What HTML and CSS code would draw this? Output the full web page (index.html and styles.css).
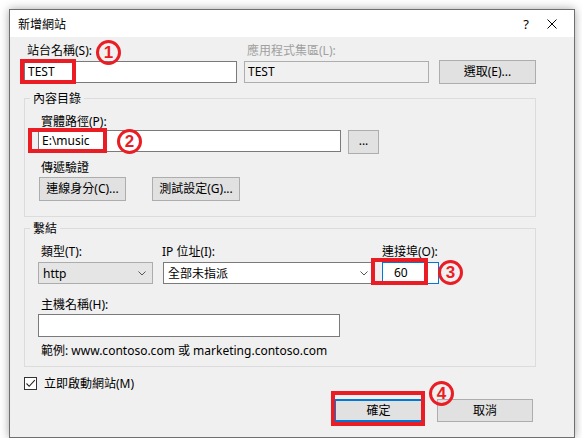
FILE: index.html
```html
<!DOCTYPE html>
<html lang="zh-Hant">
<head>
<meta charset="utf-8">
<title>新增網站</title>
<link rel="stylesheet" href="styles.css">
</head>
<body>
<div class="dialog">
  <div class="titlebar">
    <span class="title">新增網站</span>
    <span class="help">?</span>
    <svg class="close" width="10" height="10" viewBox="0 0 10 10"><path d="M0.5 0.5 L9.5 9.5 M9.5 0.5 L0.5 9.5" stroke="#000" stroke-width="1" fill="none"/></svg>
  </div>
  <div class="body">
    <div class="row1">
      <div class="lbl lbl-name">站台名稱(S):</div>
      <div class="lbl lbl-pool disabled">應用程式集區(L):</div>
      <div class="spacer"></div>
      <div class="input in-name">TEST</div>
      <div class="input in-pool">TEST</div>
      <div class="btn btn-select">選取(E)...</div>
    </div>

    <fieldset class="group g-content">
      <legend>內容目錄</legend>
      <div class="lbl">實體路徑(P):</div>
      <div class="path-row">
        <div class="input in-path">E:\music</div>
        <div class="btn btn-browse">...</div>
      </div>
      <div class="lbl lbl-auth">傳遞驗證</div>
      <div class="auth-row">
        <div class="btn btn-connect">連線身分(C)...</div>
        <div class="btn btn-test">測試設定(G)...</div>
      </div>
    </fieldset>

    <fieldset class="group g-binding">
      <legend>繫結</legend>
      <div class="bind-grid">
        <div class="lbl lbl-type">類型(T):</div>
        <div class="lbl lbl-ip">IP 位址(I):</div>
        <div class="lbl lbl-port">連接埠(O):</div>
        <div class="select sel-type"><span>http</span><svg width="8" height="5" viewBox="0 0 8 5"><path d="M0.5 0.5 L4 4 L7.5 0.5" stroke="#555" fill="none"/></svg></div>
        <div class="select sel-ip"><span>全部未指派</span><svg width="8" height="5" viewBox="0 0 8 5"><path d="M0.5 0.5 L4 4 L7.5 0.5" stroke="#555" fill="none"/></svg></div>
        <div class="input in-port">60</div>
      </div>
      <div class="lbl lbl-host">主機名稱(H):</div>
      <div class="input in-host"></div>
      <div class="lbl lbl-example">範例: www.contoso.com 或 marketing.contoso.com</div>
    </fieldset>

    <div class="check-row">
      <span class="checkbox"><svg width="11" height="11" viewBox="0 0 11 11"><path d="M1.5 5.5 L4.2 8.3 L9.8 2.2" stroke="#222" stroke-width="1.1" fill="none"/></svg></span>
      <span class="check-label">立即啟動網站(M)</span>
    </div>

    <div class="footer">
      <div class="btn btn-ok">確定</div>
      <div class="btn btn-cancel">取消</div>
    </div>
  </div>

  <div class="mark box1"></div>
  <div class="mark box2"></div>
  <div class="mark box3"></div>
  <div class="mark box4"></div>
  <div class="num num1">1</div>
  <div class="num num2">2</div>
  <div class="num num3">3</div>
  <div class="num num4">4</div>
</div>
</body>
</html>
```

FILE: styles.css
```css
* { box-sizing: border-box; }
html, body { margin: 0; padding: 0; background: #ffffff; }
body {
  font-family: "Segoe UI", "Noto Sans", "Noto Sans CJK TC", sans-serif;
  font-size: 12px;
  color: #000;
}
.dialog {
  position: relative;
  margin: 9px 0 0 9px;
  width: 566px;
  height: 429px;
  border: 1px solid #6f6f6f;
  background: #f0f0f0;
  box-shadow: 0 0 9px rgba(0,0,0,0.35);
  display: flex;
  flex-direction: column;
}
.titlebar {
  height: 27px;
  background: #fff;
  display: flex;
  align-items: center;
  padding-left: 8px;
  flex: none;
}
.title { flex: 1; font-size: 12px; }
.help { font-size: 13px; margin-right: 18px; }
.close { margin-right: 17px; display: block; }
.body {
  padding: 6px 37px 0 14px;
}
.lbl { line-height: 15px; height: 15px; white-space: nowrap; padding-left: 3px; }
.disabled { color: #a0a0a0; }
.row1 {
  display: grid;
  grid-template-columns: 213px 185px 100px;
  column-gap: 7px;
  grid-template-rows: 15px 24px;
  row-gap: 2px;
}
.lbl-pool { padding-left: 3px; }
.row1 .btn-select { margin-left: 3px; }
.input {
  background: #fff;
  border: 1px solid #7a7a7a;
  height: 22px;
  line-height: 20px;
  padding-left: 3px;
  white-space: nowrap;
}
.in-name, .in-pool { margin-top: 1px; height: 22px; }
.in-pool { background: #f0f0f0; border-color: #adadad; }
.btn {
  background: #e1e1e1;
  border: 1px solid #adadad;
  height: 24px;
  line-height: 22px;
  text-align: center;
  white-space: nowrap;
}
.group {
  margin: 0;
  width: 512px;
  border: 1px solid #dcdcdc;
  min-width: 0;
  padding: 8px 10px 15px 13px;
}
.group legend {
  padding: 0 3px;
  margin-left: -8px;
  line-height: 15px;
  height: 15px;
}
.g-content { margin-top: 7px; }
.path-row { display: flex; margin-top: 1px; align-items: flex-start; }
.in-path { width: 303px; height: 22px; }
.btn-browse { width: 31px; margin-left: 7px; line-height: 20px; }
.lbl-auth { margin-top: 6px; }
.auth-row { display: flex; margin-top: 2px; }
.btn-connect { width: 87px; margin-left: 1px; }
.btn-test { width: 88px; margin-left: 26px; }

.g-binding { margin-top: 4px; padding-bottom: 8px; }
.bind-grid {
  display: grid;
  grid-template-columns: 115px 222px 64px;
  grid-template-rows: 15px 22px;
  row-gap: 3px;
}
.lbl-ip { padding-left: 9px; }
.lbl-port { padding-left: 7px; }
.select {
  height: 22px;
  display: flex;
  align-items: center;
  justify-content: space-between;
  padding: 0 6px 0 4px;
  border: 1px solid #acacac;
  white-space: nowrap;
}
.sel-type { background: #e5e5e5; }
.sel-ip { background: #fff; margin-left: 10px; border-color: #7a7a7a; }
.in-port { margin-left: 7px; border-color: #0078d7; padding-left: 11px; height: 22px; }
.lbl-host { margin-top: 13px; }
.in-host { width: 302px; height: 23px; margin-top: 2px; }
.lbl-example { margin-top: 6px; }

.check-row {
  display: flex;
  align-items: center;
  height: 15px;
  margin-top: 9px;
}
.checkbox {
  width: 13px; height: 13px;
  border: 1px solid #333;
  background: #fff;
  display: flex; align-items: center; justify-content: center;
}
.check-label { margin-left: 7px; line-height: 15px; }
.footer {
  display: flex;
  justify-content: flex-end;
  margin-top: 8px;
  padding-right: 4px;
}
.btn-ok {
  width: 89px; height: 23px; line-height: 19px;
  border: 2px solid #0078d7;
}
.btn-cancel { width: 96px; height: 23px; line-height: 21px; margin-left: 14px; }

.mark {
  position: absolute;
  border: 4px solid #ea1c24;
}
.box1 { left: 10px; top: 49px; width: 56px; height: 25px; }
.box2 { left: 18px; top: 118px; width: 79px; height: 25px; }
.box3 { left: 361px; top: 248px; width: 57px; height: 27px; }
.box4 { left: 321px; top: 381px; width: 94px; height: 35px; }
.num {
  position: absolute;
  width: 25px; height: 25px;
  border: 3px solid #ea1c24;
  border-radius: 50%;
  color: #ea1c24;
  font-family: "Liberation Sans", "DejaVu Sans", sans-serif;
  font-weight: bold;
  font-size: 17px;
  line-height: 19px;
  text-align: center;
  background: transparent;
}
.num1 { left: 86px; top: 30px; }
.num2 { left: 107px; top: 119px; }
.num3 { left: 428px; top: 250px; }
.num4 { left: 419px; top: 371px; }
```
